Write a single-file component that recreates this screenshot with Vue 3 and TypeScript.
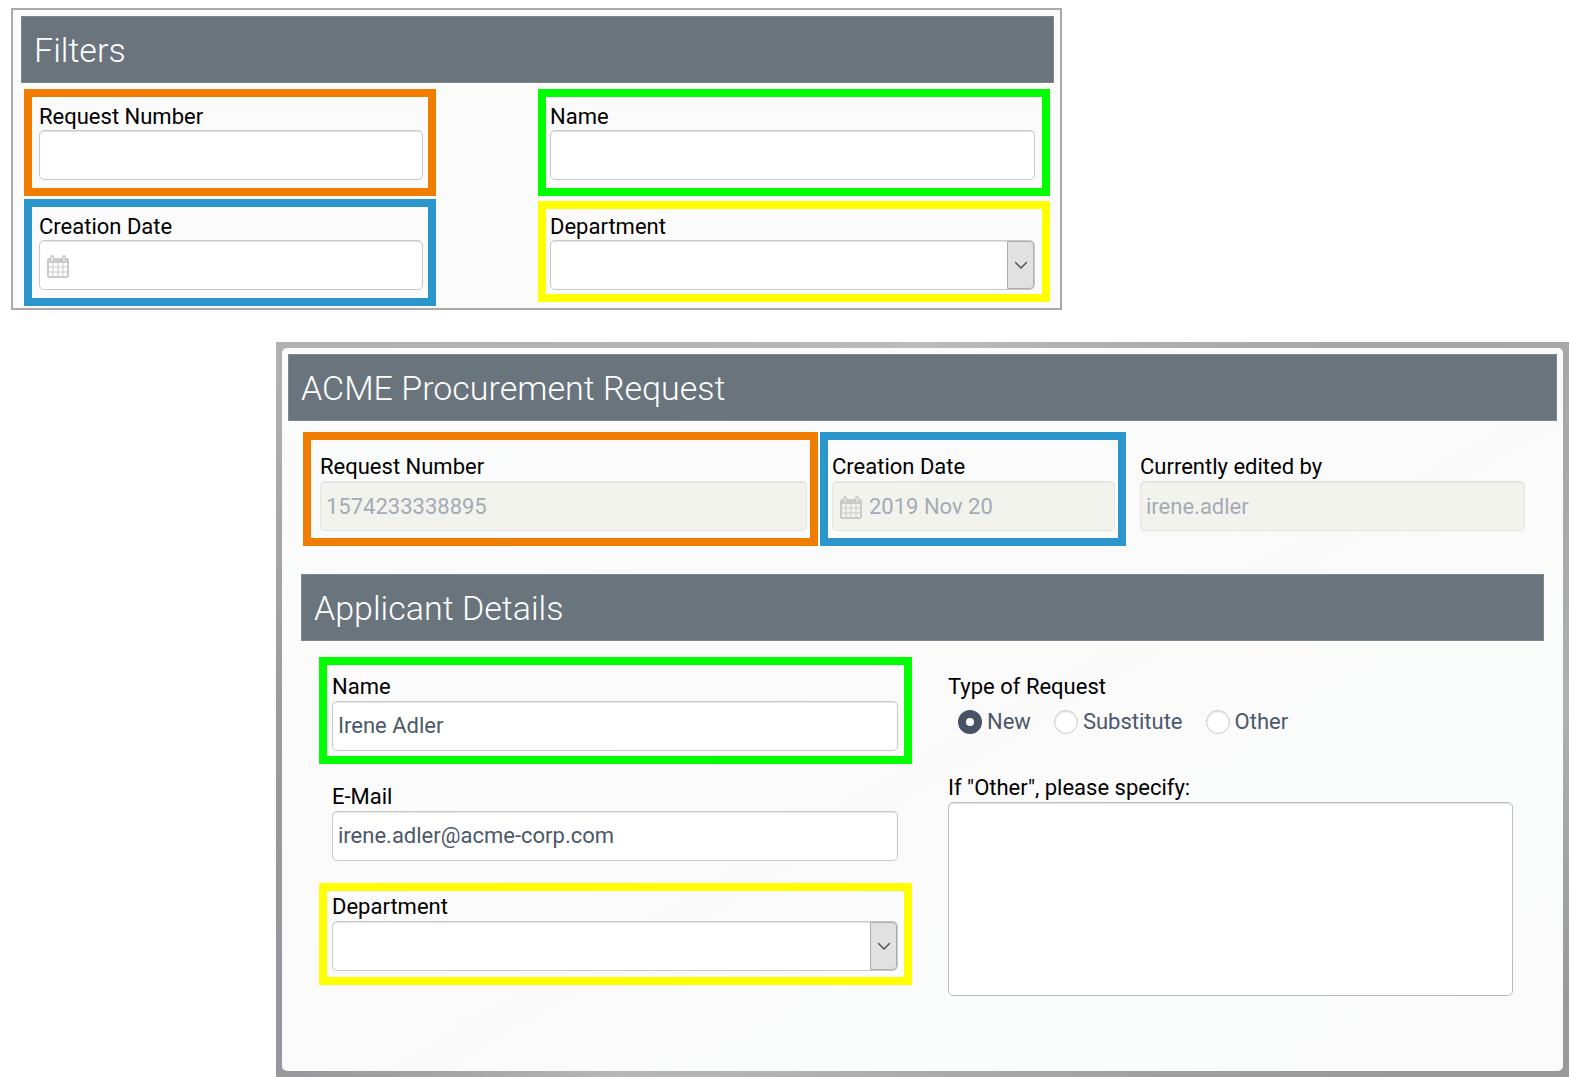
<script setup lang="ts">
import { ref } from 'vue'

interface Option {
  value: string
  label: string
}

const filterNumber = ref('')
const filterDate = ref('')
const filterName = ref('')
const filterDepartment = ref('')

const requestNumber = ref('1574233338895')
const creationDate = ref('2019 Nov 20')
const editedBy = ref('irene.adler')
const applicantName = ref('Irene Adler')
const email = ref('irene.adler@acme-corp.com')
const department = ref('')
const requestType = ref('new')
const otherText = ref('')

const requestTypes: Option[] = [
  { value: 'new', label: 'New' },
  { value: 'substitute', label: 'Substitute' },
  { value: 'other', label: 'Other' },
]

// Calendar outline with two rings and a 4 x 3 grid of days.
const calendarPath =
  'M5 0a2 2 0 0 1 2 2v1h8V2a2 2 0 0 1 4 0v1h1a2 2 0 0 1 2 2v16a2 2 0 0 1-2 2H2a2 2 0 0 1-2-2V5a2 2 0 0 1 2-2h1V2a2 2 0 0 1 2-2zM4.500 2v4h1V2zM16.500 2v4h1V2zM2 8v3.500h3.500V8zM6.500 8v3.500h4V8zM11.500 8v3.500h4V8zM16.500 8v3.500H20V8zM2 12.500v4h3.500v-4zM6.500 12.500v4h4v-4zM11.500 12.500v4h4v-4zM16.500 12.500v4H20v-4zM2 17.500V21h3.500v-3.500zM6.500 17.500V21h4v-3.500zM11.500 17.500V21h4v-3.500zM16.500 17.500V21H20v-3.500z'
</script>

<template>
  <main class="page">
    <section class="filters">
      <h2 class="bar">Filters</h2>
      <div class="filter-grid">
        <div class="column">
          <div class="field mark orange">
            <label for="f-number">Request Number</label>
            <input id="f-number" v-model="filterNumber" type="text" />
          </div>
          <div class="field mark blue">
            <label for="f-date">Creation Date</label>
            <div class="control">
              <input id="f-date" v-model="filterDate" class="date" type="text" />
              <svg class="calendar" viewBox="0 0 22 23" aria-hidden="true">
                <path :d="calendarPath" fill-rule="evenodd" />
              </svg>
            </div>
          </div>
        </div>
        <div class="column wide">
          <div class="field mark green">
            <label for="f-name">Name</label>
            <input id="f-name" v-model="filterName" type="text" />
          </div>
          <div class="field mark yellow">
            <label for="f-department">Department</label>
            <div class="control">
              <select id="f-department" v-model="filterDepartment">
                <option value=""></option>
              </select>
              <span class="arrow" aria-hidden="true">
                <svg viewBox="0 0 12 8"><path d="M0 1l6 6 6-6" /></svg>
              </span>
            </div>
          </div>
        </div>
      </div>
    </section>

    <div class="frame">
      <section class="request">
        <h1 class="bar">ACME Procurement Request</h1>
        <div class="summary">
          <div class="field mark orange">
            <label for="r-number">Request Number</label>
            <input id="r-number" v-model="requestNumber" type="text" disabled />
          </div>
          <div class="field mark blue">
            <label for="r-date">Creation Date</label>
            <div class="control">
              <input id="r-date" v-model="creationDate" class="date" type="text" disabled />
              <svg class="calendar" viewBox="0 0 22 23" aria-hidden="true">
                <path :d="calendarPath" fill-rule="evenodd" />
              </svg>
            </div>
          </div>
          <div class="field plain">
            <label for="r-editor">Currently edited by</label>
            <input id="r-editor" v-model="editedBy" type="text" disabled />
          </div>
        </div>

        <h2 class="bar inner">Applicant Details</h2>
        <div class="details">
          <div class="applicant">
            <div class="field mark green">
              <label for="a-name">Name</label>
              <input id="a-name" v-model="applicantName" type="text" />
            </div>
            <div class="field email">
              <label for="a-email">E-Mail</label>
              <input id="a-email" v-model="email" type="email" />
            </div>
            <div class="field mark yellow">
              <label for="a-department">Department</label>
              <div class="control">
                <select id="a-department" v-model="department">
                  <option value=""></option>
                </select>
                <span class="arrow" aria-hidden="true">
                  <svg viewBox="0 0 12 8"><path d="M0 1l6 6 6-6" /></svg>
                </span>
              </div>
            </div>
          </div>
          <div class="kind">
            <fieldset>
              <legend>Type of Request</legend>
              <div class="radios">
                <label v-for="t in requestTypes" :key="t.value" class="radio">
                  <input v-model="requestType" type="radio" name="request-type" :value="t.value" />
                  <span>{{ t.label }}</span>
                </label>
              </div>
            </fieldset>
            <div class="field">
              <label for="a-other">If "Other", please specify:</label>
              <textarea id="a-other" v-model="otherText"></textarea>
            </div>
          </div>
        </div>
      </section>
    </div>
  </main>
</template>

<style>
body {
  margin: 0;
  background: #fff;
}
</style>

<style scoped>
* {
  box-sizing: border-box;
}

.page {
  padding-top: 8px;
  font-family: Roboto, "Liberation Sans", sans-serif;
  font-size: 22px;
  line-height: 26px;
  color: #000;
}

.bar {
  margin: 0;
  padding: 1px 0 0 12px;
  border: 1px solid #7e8791;
  background: #69747d;
  color: #fff;
  font-size: 34px;
  font-weight: 300;
  line-height: 64px;
}

.filters {
  max-width: 1051px;
  margin-left: 11px;
  padding: 6px;
  padding-bottom: 2px;
  border: 2px solid #aaa;
  background: #fbfbfb;
}

.filters .bar {
  margin-left: 2px;
}

.filter-grid {
  display: flex;
  justify-content: space-between;
  padding: 6px 4px 0 5px;
}

.column {
  display: flex;
  flex-direction: column;
  gap: 3px;
  flex: 0 1 412px;
}

.column.wide {
  flex-basis: 512px;
  gap: 5px;
}

.field {
  display: flex;
  flex-direction: column;
}

.request .field {
  gap: 1px;
}

.mark {
  padding: 7px 5px 8px 7px;
  border: 8px solid;
}

.orange {
  border-color: #f07d00;
}

.blue {
  border-color: #2a96cc;
}

.green {
  border-color: #0f0;
}

.yellow {
  border-color: #ff0;
}

.filters .wide .mark {
  padding-left: 4px;
  padding-right: 7px;
}

.filters .wide .yellow {
  padding-top: 5px;
  padding-bottom: 4px;
}

input[type="text"],
input[type="email"],
select,
textarea {
  display: block;
  width: 100%;
  height: 50px;
  margin: 0;
  padding: 0 5px 2px;
  border: 1px solid #c9c9c9;
  border-radius: 5px;
  outline: 0;
  appearance: none;
  background: #fff;
  box-shadow: inset 0 1px 1px #e4e4e4;
  color: #4b586a;
  font: inherit;
}

input[type="text"]:disabled {
  padding-bottom: 0;
  border-color: #e4e4e1;
  background: #f3f3ee;
  color: #a4abb5;
}

input.date {
  padding-left: 36px;
}

textarea {
  height: 194px;
  border-color: #bdbdbd;
  resize: none;
}

.control {
  position: relative;
}

.calendar {
  position: absolute;
  top: 15px;
  left: 8px;
  width: 22px;
  height: 23px;
  fill: #cacaca;
}

.arrow {
  position: absolute;
  top: 1px;
  right: 1px;
  bottom: 1px;
  display: flex;
  align-items: center;
  justify-content: center;
  width: 27px;
  border: 1px solid #adadad;
  border-radius: 0 4px 4px 0;
  background: #e1e1e1;
  pointer-events: none;
}

.arrow svg {
  width: 12px;
  height: 8px;
  fill: none;
  stroke: #555;
  stroke-width: 1.5;
}

.frame {
  margin: 32px 0 0 276px;
  padding: 6px;
  background: conic-gradient(#bbbbbd 0deg, #a6a6a7 50deg, #a8a8aa 70deg, #b0b0b2 90deg, #98999b 115deg, #9a9b9c 130deg, #aeb0b0 190deg, #b6b8b8 220deg, #96979a 242deg, #9a9b9d 270deg, #b2b2b3 300deg, #b4b4b5 330deg, #bbbbbd 360deg);
}

.request {
  padding: 6px 6px 75px;
  border-radius: 5px;
  background: linear-gradient(150deg, #fbfcfc 0%, #fbfbfb 30%, #fafafa 55%, #fbfcfc 75%, #fafafa 100%);
}

.summary {
  display: grid;
  grid-template-columns: 515fr 306fr 397fr;
  gap: 2px;
  margin: 11px 32px 0 15px;
}

.summary .mark {
  padding: 14px 3px 7px 9px;
}

.summary .mark.blue {
  padding-left: 4px;
}

.summary .plain {
  padding: 22px 0 0 12px;
}

.bar.inner {
  margin: 28px 13px 0;
}

.details {
  display: grid;
  grid-template-columns: 593fr 565fr;
  gap: 36px;
  margin: 16px 44px 0 31px;
}

.applicant .mark {
  padding: 9px 6px 5px 5px;
}

.applicant .yellow {
  padding-top: 3px;
  padding-bottom: 6px;
}

.applicant .email {
  padding: 20px 14px 22px 13px;
}

.kind {
  padding-top: 17px;
}

fieldset {
  min-width: 0;
  margin: 0 0 40px;
  padding: 0;
  border: 0;
}

legend {
  padding: 0;
}

.radios {
  display: flex;
  gap: 23px;
  padding: 9px 0 0 10px;
}

.radio {
  display: flex;
  align-items: center;
  gap: 5px;
  color: #4b586a;
}

.radio input {
  width: 24px;
  height: 24px;
  margin: 0;
  border: 1px solid #ccc;
  border-radius: 50%;
  appearance: none;
  background: #fff;
  box-shadow: inset 0 1px 2px #ddd;
}

.radio input:checked {
  border: 8px solid #465366;
  box-shadow: none;
}
</style>
